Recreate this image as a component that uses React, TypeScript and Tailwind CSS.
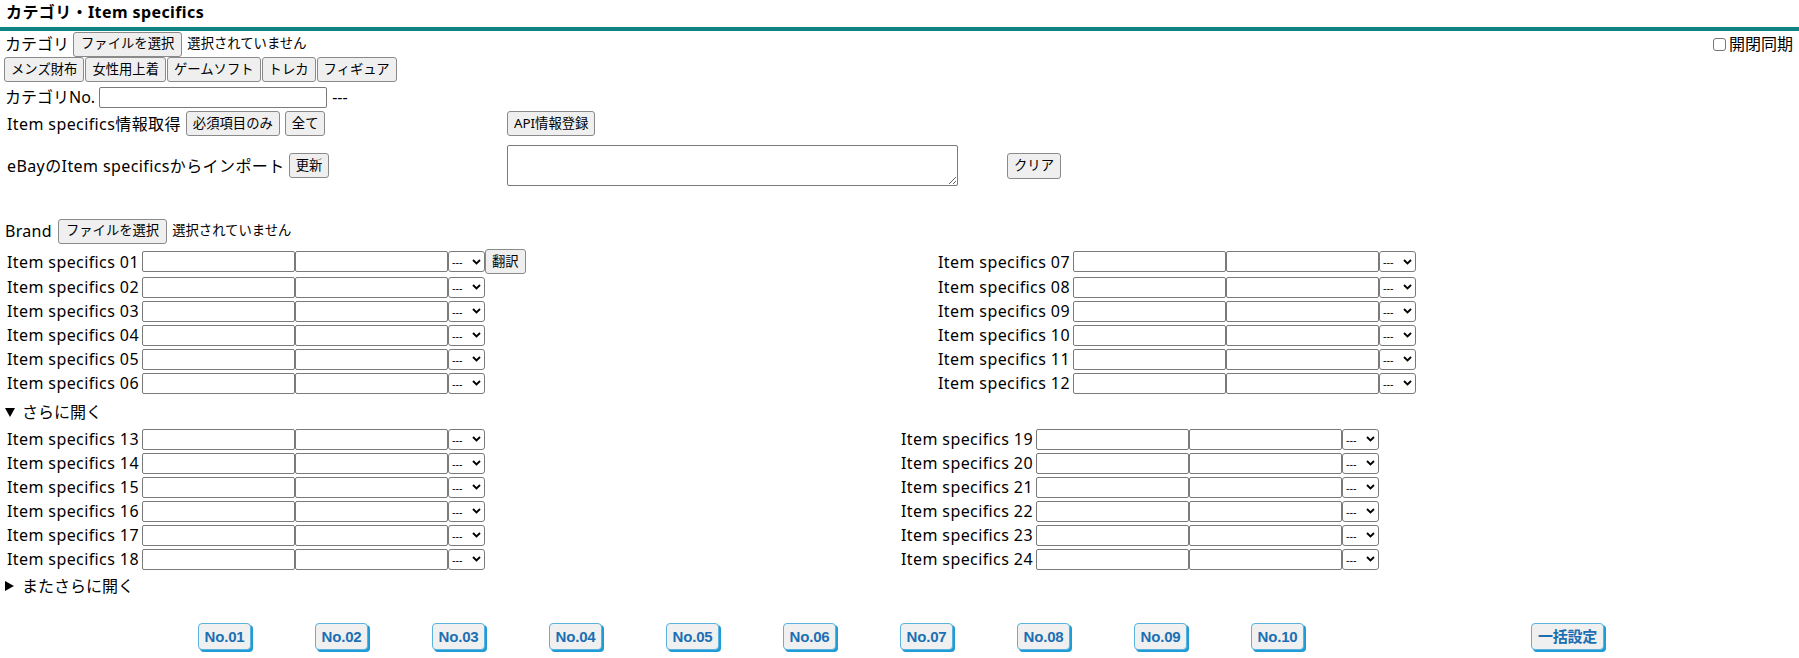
import React from "react";

const categories = ["メンズ財布", "女性用上着", "ゲームソフト", "トレカ", "フィギュア"];
const pad = (n: number) => String(n).padStart(2, "0");

const btn =
  "inline-flex h-[25px] items-center justify-center whitespace-nowrap rounded-[3px] border border-[#8a8a8a] bg-[#efefef] px-[6px] text-[13.33px] leading-none text-black";

const presetBtn =
  "h-[27px] rounded-[4px] border border-[#5ab2de] bg-[#f0f0f0] px-[6px] text-[15px] font-bold leading-none tracking-[-0.2px] text-[#1c6fb3] shadow-[2px_2px_0_0_#1f9bd6] font-['Liberation_Sans','Noto_Sans_CJK_JP',sans-serif]";

function FakeSelect() {
  return (
    <span className="inline-flex h-[21px] w-[37px] shrink-0 items-center justify-between rounded-[3px] border border-[#7a7a7a] bg-white pl-[3px] pr-[3px] text-[11px] leading-none">
      <span>---</span>
      <svg width="9" height="6" viewBox="0 0 9 6">
        <path d="M1 1 L4.5 4.5 L8 1" fill="none" stroke="#000" strokeWidth="1.8" />
      </svg>
    </span>
  );
}

function SpecRow({ n, extra }: { n: number; extra?: React.ReactNode }) {
  return (
    <div className="flex items-center">
      <span className="w-[135px] shrink-0 whitespace-nowrap tracking-[0.4px]">Item specifics {pad(n)}</span>
      <input className="h-[21px] w-[153px] shrink-0 rounded-[2px] border border-[#7a7a7a] bg-white" />
      <input className="h-[21px] w-[153px] shrink-0 rounded-[2px] border border-[#7a7a7a] bg-white" />
      <FakeSelect />
      {extra}
    </div>
  );
}

function SpecTable({ start, split, first }: { start: number; split: string; first?: boolean }) {
  const rows = [0, 1, 2, 3, 4, 5];
  return (
    <div className={"grid " + split}>
      {rows.map((i) => (
        <React.Fragment key={i}>
          <div className={"flex items-center pl-[7px] " + (first && i === 0 ? "h-[27px]" : "h-[24px]")}>
            <SpecRow
              n={start + i}
              extra={first && i === 0 ? <button className={btn}>翻訳</button> : undefined}
            />
          </div>
          <div className={"flex items-center " + (first && i === 0 ? "h-[27px]" : "h-[24px]")}>
            <SpecRow n={start + 6 + i} />
          </div>
        </React.Fragment>
      ))}
    </div>
  );
}

function Disclosure({ open, label }: { open: boolean; label: string }) {
  return (
    <div className="flex h-[24px] items-center pl-[5px]">
      {open ? (
        <svg width="10" height="9" viewBox="0 0 10 9">
          <path d="M0 0 H10 L5 9 Z" fill="#000" />
        </svg>
      ) : (
        <svg width="9" height="10" viewBox="0 0 9 10">
          <path d="M0 0 L9 5 L0 10 Z" fill="#000" />
        </svg>
      )}
      <span className={open ? "ml-[7px]" : "ml-[8px]"}>{label}</span>
    </div>
  );
}

export default function App() {
  const nums = Array.from({ length: 10 }, (_, i) => "No." + pad(i + 1));

  return (
    <div className="h-[658px] w-[1799px] overflow-hidden bg-white text-[16px] text-black font-['Noto_Sans','Noto_Sans_CJK_JP',sans-serif]">
      {/* heading */}
      <h2 className="h-[31px] border-b-4 border-[#0f8282] pl-[6px] pt-[1px] text-[16px] font-bold leading-[22px] tracking-[0.4px]">
        カテゴリ・Item specifics
      </h2>

      {/* category file */}
      <div className="flex h-[26px] items-center pl-[5px] pr-[6px]">
        <span>カテゴリ</span>
        <button className={btn + " ml-[4px] px-[7px]"}>ファイルを選択</button>
        <span className="ml-[5px] text-[13.33px]">選択されていません</span>
        <label className="ml-auto flex items-center">
          <span className="mr-[3px] inline-block h-[13px] w-[13px] rounded-[3px] border border-[#767676] bg-white" />
          <span>開閉同期</span>
        </label>
      </div>

      {/* quick category buttons */}
      <div className="flex h-[27px] items-start gap-[1px] pl-[4px]">
        {categories.map((c) => (
          <button key={c} className={btn}>
            {c}
          </button>
        ))}
      </div>

      {/* category number */}
      <div className="flex h-[26px] items-center pl-[5px]">
        <span>カテゴリNo.</span>
        <input className="ml-[4px] h-[21px] w-[228px] rounded-[2px] border border-[#7a7a7a] bg-white" />
        <span className="ml-[5px]">---</span>
      </div>

      {/* item specifics fetch / import */}
      <div className="grid grid-cols-[507px_500px_1fr]">
        <div className="flex h-[27px] items-center pl-[7px]">
          <span className="tracking-[0.4px]">Item specifics情報取得</span>
          <button className={btn + " ml-[5px]"}>必須項目のみ</button>
          <button className={btn + " ml-[5px]"}>全て</button>
        </div>
        <div className="flex h-[27px] items-center">
          <button className={btn}>API情報登録</button>
        </div>
        <div />

        <div className="mt-[8px] flex h-[41px] items-center pl-[7px]">
          <span className="tracking-[0.4px]">eBayのItem specificsからインポート</span>
          <button className={btn + " ml-[4px]"}>更新</button>
        </div>
        <div className="mt-[8px] flex h-[41px] items-center">
          <textarea className="h-[41px] w-[451px] rounded-[2px] border border-[#7a7a7a] bg-white" />
        </div>
        <div className="mt-[8px] flex h-[41px] items-center">
          <button className={btn + " h-[26px]"}>クリア</button>
        </div>
      </div>

      {/* brand */}
      <div className="mt-[32px] flex h-[26px] items-center pl-[5px]">
        <span className="tracking-[0.3px]">Brand</span>
        <button className={btn + " ml-[6px] px-[7px]"}>ファイルを選択</button>
        <span className="ml-[5px] text-[13.33px]">選択されていません</span>
      </div>

      <div className="mt-[4px]">
        <SpecTable start={1} split="grid-cols-[938px_1fr]" first />
      </div>

      <div className="mt-[5px]">
        <Disclosure open label="さらに開く" />
      </div>

      <div className="mt-[3px]">
        <SpecTable start={13} split="grid-cols-[901px_1fr]" />
      </div>

      <div className="mt-[3px]">
        <Disclosure open={false} label="またさらに開く" />
      </div>

      {/* preset buttons */}
      <div className="mt-[25px] flex h-[28px] items-start pl-[166px]">
        {nums.map((n) => (
          <div key={n} className="flex w-[117px] justify-center">
            <button className={presetBtn}>{n}</button>
          </div>
        ))}
        <div className="flex flex-1 justify-center">
          <button className={presetBtn}>一括設定</button>
        </div>
      </div>
    </div>
  );
}
